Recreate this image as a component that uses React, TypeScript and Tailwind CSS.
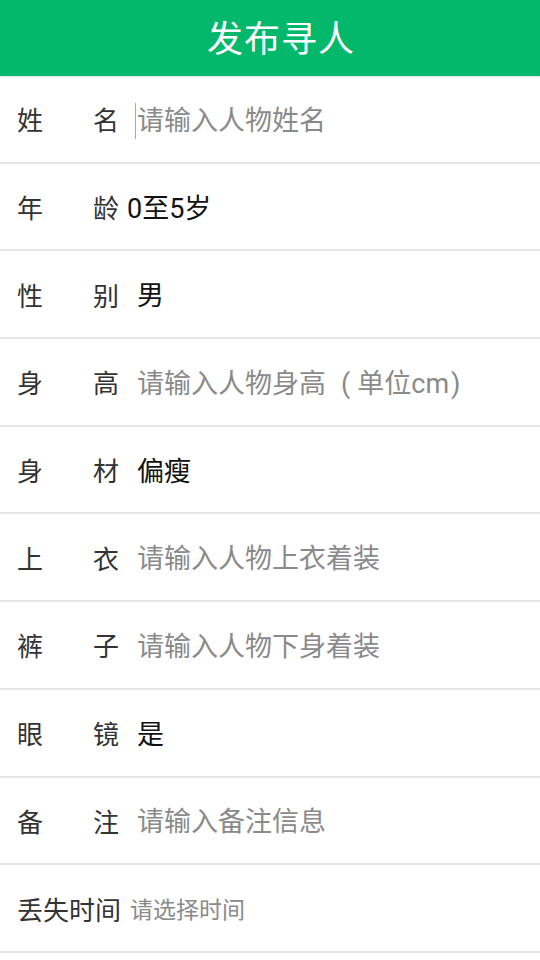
import type { ReactNode } from "react";

const rows: { label: string[]; value: ReactNode; placeholder?: boolean; cursor?: boolean; tight?: boolean }[] = [
  { label: ["姓", "名"], value: "请输入人物姓名", placeholder: true, cursor: true },
  { label: ["年", "龄"], value: "0至5岁", tight: true },
  { label: ["性", "别"], value: "男" },
  {
    label: ["身", "高"],
    value: (
      <>
        请输入人物身高<span className="ml-[15px] mr-[7px]">(</span>单位cm<span className="ml-[2px]">)</span>
      </>
    ),
    placeholder: true,
  },
  { label: ["身", "材"], value: "偏瘦" },
  { label: ["上", "衣"], value: "请输入人物上衣着装", placeholder: true },
  { label: ["裤", "子"], value: "请输入人物下身着装", placeholder: true },
  { label: ["眼", "镜"], value: "是" },
  { label: ["备", "注"], value: "请输入备注信息", placeholder: true },
];

export default function App() {
  return (
    <div className="w-[540px] h-[960px] bg-white overflow-hidden font-['Roboto','Noto_Sans_CJK_SC',sans-serif]">
      <header className="h-[76px] bg-[#03b76b] flex items-center justify-center shadow-[0_1px_2px_rgba(0,0,0,0.12)] relative">
        <h1 className="text-white text-[36px] leading-none tracking-[1px] pt-[4px] pl-[22px]">发布寻人</h1>
      </header>

      {rows.map((r, i) => (
        <div key={i} className="h-[87.7px] border-b-2 border-[#e6e6e6] flex items-center pl-[17px] pt-[5px]">
          <div className="w-[102px] flex justify-between text-[26px] text-[#333] leading-none">
            <span>{r.label[0]}</span>
            <span>{r.label[1]}</span>
          </div>
          {r.cursor && <div className="w-px h-[36px] bg-[#aaa] ml-[16px]" />}
          <div
            className={
              "text-[27px] leading-none whitespace-nowrap " +
              (r.placeholder ? "text-[#8a8a8a] " : "text-[#111] ") +
              (r.cursor ? "ml-[1px]" : r.tight ? "ml-[8px]" : "ml-[18px]")
            }
          >
            {r.value}
          </div>
        </div>
      ))}

      <div className="h-[87.7px] border-b-2 border-[#e6e6e6] flex items-center pl-[17px] pt-[5px]">
        <span className="text-[26px] text-[#333] leading-none">丢失时间</span>
        <span className="text-[23px] text-[#8a8a8a] leading-none ml-[9px]">请选择时间</span>
      </div>
    </div>
  );
}
